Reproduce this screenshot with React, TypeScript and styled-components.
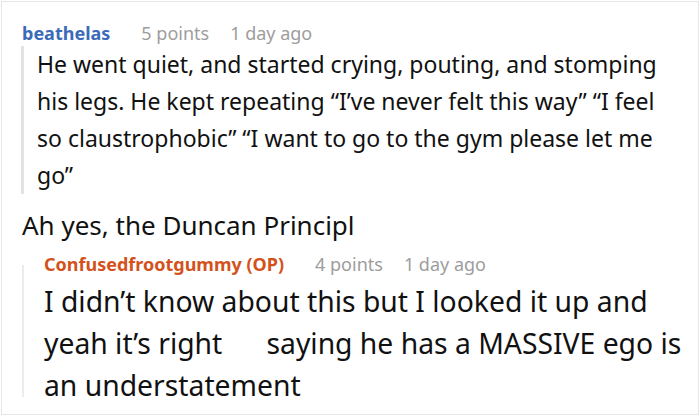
import React from "react";
import styled, { createGlobalStyle } from "styled-components";

const GlobalStyle = createGlobalStyle`
  html, body {
    margin: 0;
    padding: 0;
    background: #fff;
  }
  body {
    font-family: "Noto Sans", "Open Sans", sans-serif;
    color: #111;
  }
`;

const Frame = styled.div`
  box-sizing: border-box;
  width: 698px;
  height: 414px;
  margin: 1px;
  border: 1px solid #e6e6e6;
  padding: 18px 0 0 19px;
  overflow: hidden;
`;

const Meta = styled.div<{ $indent?: number }>`
  display: flex;
  align-items: baseline;
  gap: 21px;
  font-size: 18px;
  line-height: 26px;
  padding-left: ${(p) => p.$indent ?? 0}px;
`;

const Author = styled.span<{ $op?: boolean }>`
  font-weight: 700;
  margin-right: 10px;
  color: ${(p) => (p.$op ? "#d3521c" : "#3b6bb8")};
`;

const Info = styled.span`
  color: #9d9d9d;
`;

const Quote = styled.div`
  margin-top: 0;
  padding-left: 13px;
  border-left: 3px solid #e3e3e3;
  font-size: 23px;
  line-height: 37px;
  width: 630px;
`;

const Text = styled.p<{ $size: number; $lh: number; $indent?: number; $top?: number }>`
  margin: ${(p) => p.$top ?? 0}px 0 0 0;
  padding-left: ${(p) => p.$indent ?? 0}px;
  font-size: ${(p) => p.$size}px;
  line-height: ${(p) => p.$lh}px;
`;

const Reply = styled.div`
  display: grid;
  grid-template-columns: 2px 652px;
  column-gap: 20px;
  margin: 8px 0 0 1px;
`;

const ThreadLine = styled.div`
  grid-row: 1 / span 2;
  margin: 14px 0 9px;
  background: #ececec;
`;

export default function App() {
  return (
    <>
      <GlobalStyle />
      <Frame>
        <Meta $indent={1}>
          <Author>beathelas</Author>
          <Info>5 points</Info>
          <Info>1 day ago</Info>
        </Meta>
        <Quote>
          He went quiet, and started crying, pouting, and stomping his legs. He kept
          repeating “I’ve never felt this way” “I feel so claustrophobic” “I want to go
          to the gym please let me go”
        </Quote>
        <Text $size={26} $lh={36} $indent={1} $top={13}>
          Ah yes, the Duncan Principl
        </Text>
        <Reply>
          <ThreadLine />
          <Meta>
            <Author $op>Confusedfrootgummy (OP)</Author>
            <Info>4 points</Info>
            <Info>1 day ago</Info>
          </Meta>
          <Text $size={28.3} $lh={42} $top={3}>
            I didn’t know about this but I looked it up and yeah it’s
            right{"\u00a0\u00a0\u00a0\u00a0\u00a0"} saying he has a MASSIVE ego is an
            understatement
          </Text>
        </Reply>
      </Frame>
    </>
  );
}
